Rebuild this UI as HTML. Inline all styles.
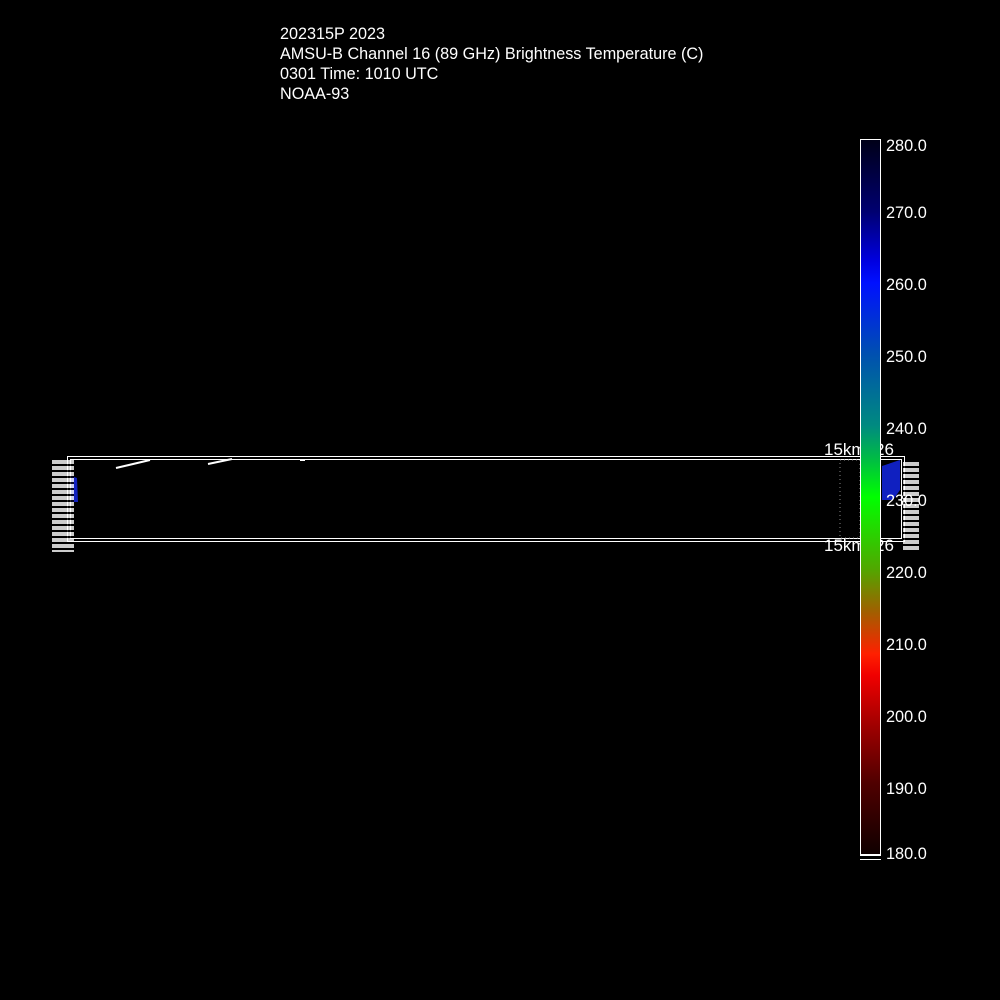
<!DOCTYPE html>
<html><head><style>
body{margin:0;background:#000;width:1000px;height:1000px;overflow:hidden;position:relative;font-family:"Liberation Sans",sans-serif;color:#fff}
.t{position:absolute;left:280px;font-size:16.2px;line-height:20px}
.cb{position:absolute;left:860px;top:139px;width:19px;height:714px;border:1px solid #fff;
background:linear-gradient(to bottom,#000018 0%,#000070 10%,#0000e0 17%,#0010ff 20%,#0050b0 30%,#008a80 40%,#00c040 45%,#00ff00 50%,#50a800 60%,#a06000 66%,#ff2000 72%,#f00000 75%,#a00000 82%,#500000 90%,#100000 100%)}
.lb{position:absolute;left:886px;font-size:16.3px}
</style></head><body>
<div class="t" style="top:24px">202315P 2023<br>AMSU-B Channel 16 (89 GHz) Brightness Temperature (C)<br>0301 Time: 1010 UTC<br>NOAA-93</div>
<div style="position:absolute;left:67px;top:456px;width:836px;height:84px;border:1px solid #fff"></div>
<div style="position:absolute;left:70px;top:459px;width:830px;height:78px;border:1px solid #fff"></div>
<svg style="position:absolute;left:0;top:0" width="1000" height="1000">
<path d="M116 468 L150 460 M208 464 L232 459 M300 460 L305 460" stroke="#fff" stroke-width="2"/>
<polygon points="71,476 77,478 78,502 71,502" fill="#1020c0"/>
<polygon points="882,466 900,460 900,490 893,500 882,500" fill="#1020c0"/>
<rect x="840" y="460" width="20" height="78" fill="none" stroke="#888" stroke-dasharray="1,3"/>
</svg>
<div style="position:absolute;left:52px;top:460px;width:22px;height:92px;background:repeating-linear-gradient(#fff 0 4px,#000 4px 6px);opacity:.8"></div>
<div style="position:absolute;left:824px;top:440px;font-size:17px">15km226</div>
<div style="position:absolute;left:824px;top:536px;font-size:17px">15km226</div>
<div style="position:absolute;left:903px;top:462px;width:16px;height:90px;background:repeating-linear-gradient(#fff 0 4px,#000 4px 6px);opacity:.8"></div>
<div class="cb"></div>
<div style="position:absolute;left:860px;top:855px;width:21px;height:3px;border-top:1px solid #fff;border-bottom:1px solid #fff"></div>
<div class="lb" style="top:137px">280.0</div>
<div class="lb" style="top:204px">270.0</div>
<div class="lb" style="top:276px">260.0</div>
<div class="lb" style="top:348px">250.0</div>
<div class="lb" style="top:420px">240.0</div>
<div class="lb" style="top:492px">230.0</div>
<div class="lb" style="top:564px">220.0</div>
<div class="lb" style="top:636px">210.0</div>
<div class="lb" style="top:708px">200.0</div>
<div class="lb" style="top:780px">190.0</div>
<div class="lb" style="top:845px">180.0</div>
</body></html>
